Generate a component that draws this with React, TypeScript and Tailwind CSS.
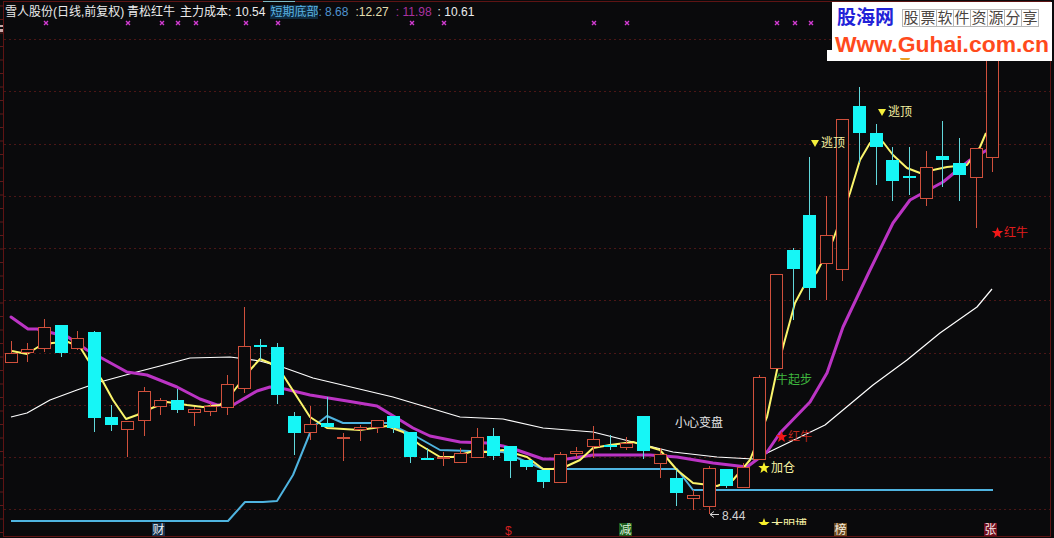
// [left, bodyTop, bodyBottom, wickTop, wickBottom, cyan]
const candles: [number, number, number, number, number, boolean][] = [
  [5, 353, 362, 341, 362, false],
  [21, 349, 352, 343, 362, false],
  [38, 327, 348, 319, 352, false],
  [55, 325, 353, 325, 357, true],
  [71, 338, 348, 331, 350, false],
  [88, 332, 418, 331, 432, true],
  [105, 417, 425, 405, 431, true],
  [121, 421, 429, 421, 457, false],
  [138, 391, 420, 387, 436, false],
  [154, 400, 406, 398, 415, false],
  [171, 400, 410, 389, 413, true],
  [188, 409, 412, 407, 426, false],
  [204, 406, 411, 403, 416, false],
  [221, 384, 407, 375, 415, false],
  [238, 346, 388, 307, 393, false],
  [254, 345, 347, 339, 360, true],
  [271, 347, 395, 343, 404, true],
  [288, 416, 433, 412, 455, true],
  [304, 424, 432, 406, 440, false],
  [321, 423, 427, 397, 427, true],
  [337, 437, 438, 433, 461, false],
  [354, 427, 429, 425, 441, false],
  [371, 420, 427, 420, 433, false],
  [387, 416, 428, 416, 433, true],
  [404, 432, 457, 432, 463, true],
  [421, 458, 460, 448, 460, true],
  [437, 457, 458, 452, 466, false],
  [454, 453, 462, 448, 462, false],
  [471, 437, 457, 428, 457, false],
  [487, 436, 456, 428, 460, true],
  [504, 446, 461, 446, 478, true],
  [520, 460, 467, 460, 470, true],
  [537, 470, 482, 470, 488, true],
  [554, 454, 482, 452, 482, false],
  [570, 451, 453, 447, 458, false],
  [587, 439, 446, 426, 458, false],
  [604, 445, 446, 435, 450, true],
  [620, 443, 447, 437, 450, false],
  [637, 416, 451, 416, 459, true],
  [654, 454, 463, 448, 478, false],
  [670, 478, 493, 470, 506, true],
  [687, 495, 498, 490, 510, false],
  [703, 468, 506, 466, 514, false],
  [720, 469, 486, 469, 488, true],
  [737, 467, 487, 463, 487, false],
  [753, 377, 459, 375, 459, false],
  [770, 274, 368, 274, 368, false],
  [787, 250, 269, 248, 320, true],
  [803, 215, 288, 157, 300, true],
  [820, 235, 263, 196, 300, false],
  [836, 119, 269, 119, 281, false],
  [853, 106, 133, 87, 163, true],
  [870, 133, 147, 124, 185, true],
  [886, 160, 181, 147, 201, true],
  [903, 176, 178, 147, 195, true],
  [920, 167, 198, 151, 206, false],
  [936, 156, 160, 121, 187, true],
  [953, 163, 175, 138, 201, true],
  [970, 148, 177, 148, 228, false],
  [986, 55, 157, 55, 172, false],
];

const whiteLine = '11,417 27,413 50,400 77,390 100,382 133,373 160,366 190,358 230,357 260,361 285,368 313,378 393,397 460,417 503,419 543,428 593,432 633,442 673,452 717,457 753,459 767,453 825,425 873,385 907,360 940,333 977,307 992,289';
const blueLine = '11,521 228,521 245,502 263,502 277,501 293,475 310,433 313,427 327,416 343,423 387,423 417,437 440,450 470,451 503,452 527,462 543,469 677,469 693,490 993,490';
const magentaLine = '11,317 28,329 37,329 68,337 87,350 127,372 147,375 177,387 200,399 217,405 233,405 257,391 270,387 285,389 310,395 347,401 377,406 400,420 413,428 430,436 460,442 487,443 503,446 517,450 543,459 567,459 593,455 650,455 677,457 713,463 747,467 767,452 780,433 810,402 827,373 843,327 870,270 893,223 910,200 943,182 970,160 987,150';
const yellowLine = '12,351 27,354 38,347 52,343 68,342 80,347 88,360 102,380 113,400 126,419 137,415 152,408 167,402 187,405 203,407 220,405 233,392 250,370 260,359 270,363 283,375 310,417 327,428 360,430 387,426 403,432 420,445 440,457 453,457 470,452 487,452 503,450 527,457 543,469 553,469 567,466 580,460 593,448 610,445 633,442 660,450 677,470 693,483 717,486 733,480 750,460 767,417 777,370 783,347 795,303 803,288 817,272 833,240 850,193 860,160 870,143 883,142 893,155 907,168 920,173 933,170 947,167 967,165 980,147 986,133';

const gridYs = [39, 91, 144, 196, 248, 300, 353, 405, 457, 509];
const crossXs = [46, 128, 162, 178, 196, 246, 278, 412, 444, 594, 627, 777, 795, 811];
const watermarkChars = ['股', '票', '软', '件', '资', '源', '分', '享'];

function star(cx: number, cy: number, r: number) {
  const pts: string[] = [];
  for (let i = 0; i < 10; i++) {
    const rad = i % 2 === 0 ? r : r * 0.42;
    const a = -Math.PI / 2 + (i * Math.PI) / 5;
    pts.push(`${(cx + rad * Math.cos(a)).toFixed(1)},${(cy + rad * Math.sin(a)).toFixed(1)}`);
  }
  return pts.join(' ');
}

function Chart() {
  return (
    <svg className="absolute inset-0" width="1054" height="538" viewBox="0 0 1054 538">
      <rect x="3.5" y="1.5" width="1047" height="535" fill="none" stroke="#5e1414" />
      {Array.from({ length: 40 }, (_, i) => (
        <line key={i} x1="0" x2="3" y1={6 + i * 13.5} y2={6 + i * 13.5} stroke="#5e1a1a" />
      ))}
      <rect x="0" y="25" width="3" height="2" fill="#c9a9a9" />
      <rect x="0" y="29" width="3" height="3" fill="#c9a9a9" />
      {gridYs.map((y) => (
        <line key={y} x1="4" x2="1050" y1={y + 0.5} y2={y + 0.5} stroke="#4c1616" strokeDasharray="2 3" />
      ))}
      {crossXs.map((x) => (
        <path key={x} d={`M${x - 2} 21 L${x + 2} 25 M${x + 2} 21 L${x - 2} 25`} stroke="#d13bd1" strokeWidth="1.4" fill="none" />
      ))}
      <line x1="263" x2="295" y1="1.5" y2="1.5" stroke="#7fb8c4" />

      <polyline points={whiteLine} fill="none" stroke="#ffffff" strokeWidth="1.2" strokeLinejoin="round" />
      <polyline points={blueLine} fill="none" stroke="#4fb4e0" strokeWidth="2" strokeLinejoin="round" />
      <polyline points={magentaLine} fill="none" stroke="#bb34c4" strokeWidth="3" strokeLinejoin="round" strokeLinecap="round" />
      <polyline points={yellowLine} fill="none" stroke="#fbf56c" strokeWidth="2" strokeLinejoin="round" />

      {candles.map(([x, top, bottom, wickTop, wickBottom, cyan]) =>
        cyan ? (
          <g key={x}>
            <line x1={x + 6.5} x2={x + 6.5} y1={wickTop} y2={wickBottom} stroke="#62d8dc" />
            <rect x={x} y={top} width="13" height={Math.max(bottom - top, 2)} fill="#16f6f6" />
          </g>
        ) : (
          <g key={x}>
            <line x1={x + 6.5} x2={x + 6.5} y1={wickTop} y2={wickBottom} stroke="#d0503c" />
            <rect x={x + 0.5} y={top + 0.5} width="12" height={bottom - top} fill="#0a0a0c" stroke="#d0503c" />
          </g>
        ),
      )}

      <polygon points="811,140 819,140 815,147" fill="#f5f03c" />
      <polygon points="878,109 886,109 882,116" fill="#f5f03c" />
      <polygon points={star(997.5, 233, 6)} fill="#f01818" />
      <polygon points={star(781.5, 437, 6)} fill="#f01818" />
      <polygon points={star(764, 468, 6)} fill="#f8f02c" />
      <polygon points={star(764, 524, 6)} fill="#f8f02c" />
      <rect x="750" y="525" width="28" height="11" fill="#0a0a0c" />
      <path d="M710 514.5 H719 M710 514.5 L714 511.5 M710 514.5 L714 517.5" stroke="#d8d8d8" fill="none" />
    </svg>
  );
}

export default function App() {
  return (
    <div className="relative w-[1054px] h-[538px] overflow-hidden bg-[#0a0a0c] text-xs leading-[14px] font-['Liberation_Sans','Noto_Sans_CJK_SC',sans-serif]">
      <Chart />

      <div className="relative flex items-center pl-[5px] pt-[5px] text-[#ececec] whitespace-nowrap">
        <span className="w-[122px]">雪人股份(日线,前复权)</span>
        <span className="w-[53px]">青松红牛</span>
        <span>主力成本:</span>
        <span className="ml-1">10.54</span>
        <span className="ml-[5px] bg-[#0f2a3e] text-[#5ab4e2]">短期底部</span>
        <span className="text-[#4f93cf]">: 8.68</span>
        <span className="ml-[7px] text-[#e3deb0]">:12.27</span>
        <span className="ml-[7px] text-[#a8329f]">: 11.98</span>
        <span className="ml-[6px]">: 10.61</span>
      </div>

      <div className="absolute left-[832px] top-[2px] w-[220px] h-[59px] bg-white">
        <div className="flex items-center pl-[5px] pt-[5px]">
          <span className="w-[66px] text-[19px] leading-[22px] font-bold text-[#2222d8]">股海网</span>
          <div className="flex">
            {watermarkChars.map((c) => (
              <span key={c} className="w-[18px] h-[18px] border border-[#b8b8b8] -ml-px text-[15px] leading-[16px] text-center text-[#4a4440]">{c}</span>
            ))}
          </div>
        </div>
        <div className="pl-[3px] mt-[3px] text-[22.9px] leading-[24px] font-bold text-[#ff4a1c] whitespace-nowrap">Www.Guhai.com.cn</div>
      </div>
      <div className="absolute left-[827px] top-[50px] w-[6px] h-[11px] bg-white" />
      <div className="absolute left-[900px] top-[58px] w-[10px] h-[2px] rounded-b-full bg-[#e8a020]" />

      <span className="absolute left-[821px] top-[136px] text-[#f3efa0]">逃顶</span>
      <span className="absolute left-[888px] top-[105px] text-[#f3efa0]">逃顶</span>
      <span className="absolute left-[1004px] top-[226px] text-[#e01c1c]">红牛</span>
      <span className="absolute left-[776px] top-[373px] text-[#3fb83f]">牛起步</span>
      <span className="absolute left-[788px] top-[430px] text-[#b8261c]">红牛</span>
      <span className="absolute left-[771px] top-[461px] text-[#f6f2a4]">加仓</span>
      <span className="absolute left-[675px] top-[416px] text-[#e6e6e6]">小心变盘</span>
      <span className="absolute left-[722px] top-[509px] text-[#d4d4d4]">8.44</span>
      <div className="absolute left-[771px] top-[518px] w-[40px] h-[7px] overflow-hidden">
        <span className="block text-[#f6f2a4]">大明博</span>
      </div>

      <span className="absolute left-[152px] top-[523px] w-[13px] h-[13px] bg-[#16324c] text-center text-[#e6eef4]">财</span>
      <span className="absolute left-[505px] top-[524px] text-[#d42020]">$</span>
      <span className="absolute left-[619px] top-[523px] w-[13px] h-[13px] bg-[#1c5a1c] text-center text-[#d8f0d8]">减</span>
      <span className="absolute left-[834px] top-[523px] w-[13px] h-[13px] bg-[#6a4a20] text-center text-[#f6efe0]">榜</span>
      <span className="absolute left-[984px] top-[523px] w-[13px] h-[13px] bg-[#701020] text-center text-[#f8e8e8]">张</span>
    </div>
  );
}
